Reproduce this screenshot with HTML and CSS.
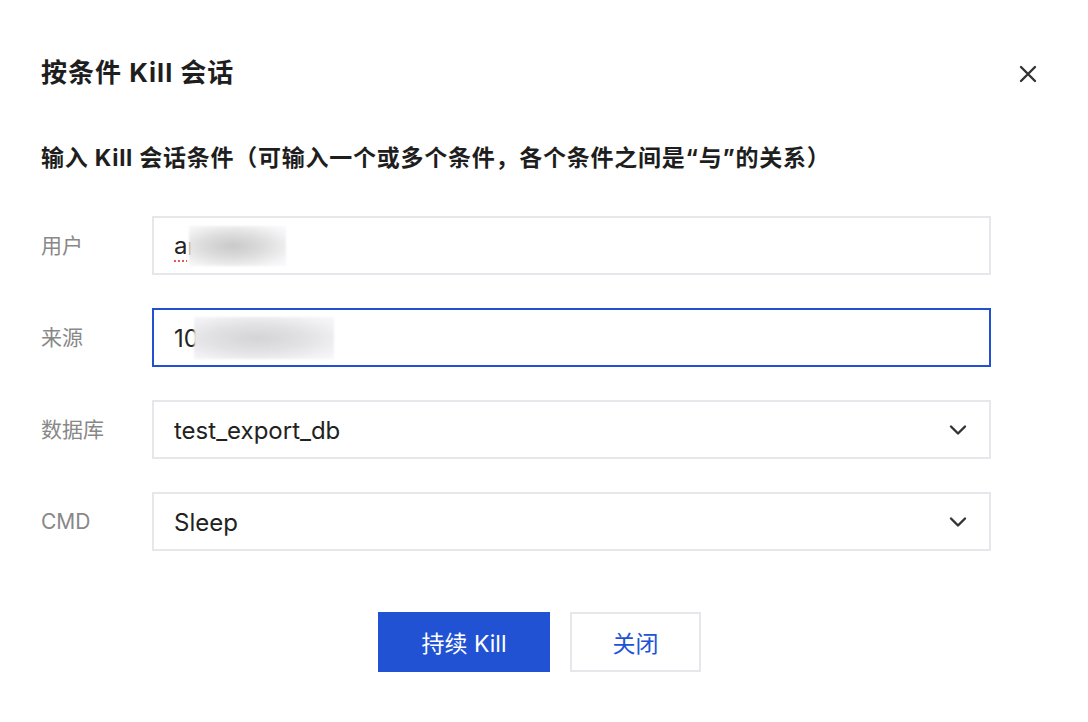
FILE: index.html
```html
<!DOCTYPE html>
<html lang="zh-CN">
<head>
<meta charset="utf-8">
<title>按条件 Kill 会话</title>
<link rel="stylesheet" href="styles.css">
</head>
<body>
<div class="dialog">
  <div class="header">
    <h1 class="title">按条件 Kill 会话</h1>
    <button class="close" aria-label="关闭">
      <svg width="20" height="20" viewBox="0 0 20 20"><path d="M3 3 L17 17 M17 3 L3 17" stroke="#333" stroke-width="2.4" stroke-linecap="round" fill="none"/></svg>
    </button>
  </div>
  <div class="subtitle">输入 Kill 会话条件（可输入一个或多个条件，各个条件之间是“与”的关系）</div>
  <div class="form">
    <div class="row">
      <div class="label">用户</div>
      <div class="field"><span class="spell">a</span><span class="value">r</span><span class="redact r1"></span></div>
    </div>
    <div class="row">
      <div class="label">来源</div>
      <div class="field focused"><span class="value">10</span><span class="redact r2"></span></div>
    </div>
    <div class="row">
      <div class="label">数据库</div>
      <div class="field select"><span class="value">test_export_db</span>
        <svg class="chev" width="18" height="12" viewBox="0 0 18 12"><path d="M2 2.5 L9 9.5 L16 2.5" stroke="#333" stroke-width="2.4" stroke-linecap="round" stroke-linejoin="round" fill="none"/></svg>
      </div>
    </div>
    <div class="row">
      <div class="label">CMD</div>
      <div class="field select"><span class="value">Sleep</span>
        <svg class="chev" width="18" height="12" viewBox="0 0 18 12"><path d="M2 2.5 L9 9.5 L16 2.5" stroke="#333" stroke-width="2.4" stroke-linecap="round" stroke-linejoin="round" fill="none"/></svg>
      </div>
    </div>
  </div>
  <div class="footer">
    <button class="btn primary">持续 Kill</button>
    <button class="btn secondary">关闭</button>
  </div>
</div>
</body>
</html>
```
FILE: styles.css
```css
html, body {
  margin: 0;
  padding: 0;
  background: #fff;
}
body {
  font-family: Inter, "Noto Sans CJK SC", sans-serif;
  color: #222;
}
.dialog {
  padding: 52px 50px 0 41px;
}
.header {
  display: flex;
  justify-content: space-between;
  align-items: center;
  height: 42px;
}
.title {
  margin: 0;
  font-size: 26px;
  letter-spacing: 1px;
  font-weight: 700;
  line-height: 40px;
  color: #1e1e1e;
}
.close {
  border: 0;
  background: none;
  padding: 0;
  width: 20px;
  height: 20px;
  margin-top: 2px;
  display: flex;
}
.subtitle {
  margin-top: 48px;
  font-size: 23px;
  letter-spacing: 0.75px;
  font-weight: 700;
  line-height: 32px;
  color: #1e1e1e;
  white-space: nowrap;
}
.form {
  margin-top: 42px;
  margin-right: 47px;
  display: flex;
  flex-direction: column;
  gap: 33px;
}
.row {
  display: grid;
  grid-template-columns: 111px 1fr;
  align-items: center;
}
.label {
  font-size: 21px;
  color: #888;
  line-height: 30px;
  margin-top: 0;
}
.field {
  height: 59px;
  box-sizing: border-box;
  border: 2px solid #e6e6eb;
  padding: 0 20px;
  display: flex;
  align-items: center;
  font-size: 24px;
  color: #222;
}
.field.focused {
  border-color: #2150d2;
}
.field.select {
  justify-content: space-between;
  padding-right: 22px;
}
.spell {
  text-decoration: underline dotted #e55;
  text-decoration-thickness: 2px;
  text-underline-offset: 6px;
}
.value {
  white-space: pre;
  margin-top: 2px;
}
.redact {
  display: inline-block;
  height: 40px;
  background: radial-gradient(ellipse at 45% 50%, #c9c9c9 0%, #dcdcdc 40%, #f4f4f6 80%, #fbfbfd 100%);
  filter: blur(1px);
}
.r1 {
  width: 97px;
  margin-left: -8px;
}
.r2 {
  width: 140px;
  height: 42px;
  margin-left: -5px;
  background: radial-gradient(ellipse at 45% 50%, #d4d4d6 0%, #e2e2e4 45%, #f2f2f6 80%, #f8f8fc 100%);
}
.chev {
  display: block;
}
.footer {
  margin-top: 61px;
  display: flex;
  justify-content: center;
  gap: 20px;
}
.btn {
  height: 60px;
  font-family: Inter, "Noto Sans CJK SC", sans-serif;
  font-size: 23px;
  cursor: pointer;
  box-sizing: border-box;
}
.primary {
  width: 172px;
  background: #2152d4;
  color: #fff;
  border: 0;
}
.secondary {
  width: 131px;
  background: #fff;
  color: #2152d4;
  border: 2px solid #e6e6eb;
}
```
